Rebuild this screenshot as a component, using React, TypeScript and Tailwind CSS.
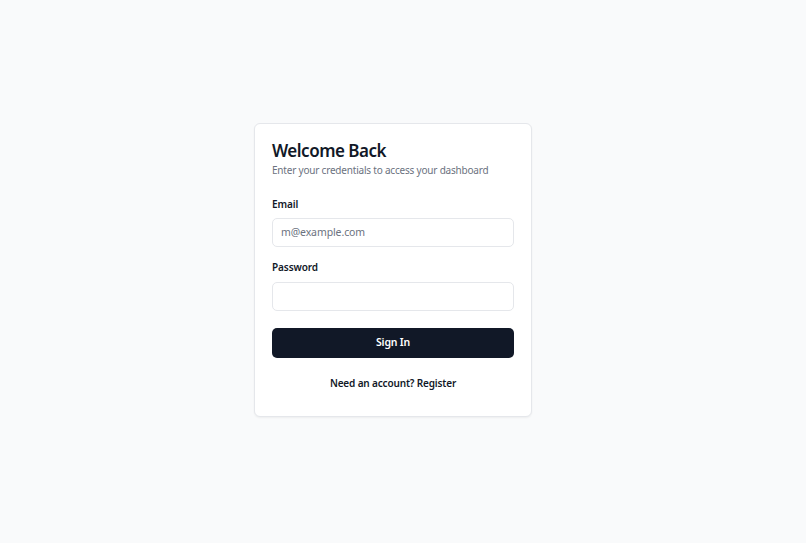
export default function App() {
  return (
    <div
      className="flex min-h-screen items-center justify-center bg-[#f9fafb] pr-[20px] pb-[4px] text-[#111827]"
      style={{ fontFamily: '"Noto Sans", "Open Sans", sans-serif' }}
    >
      <div className="w-[278px] rounded-[6px] border border-[#e5e7eb] bg-white px-[17px] pt-[15px] pb-[26px] shadow-[0_1px_2px_rgba(0,0,0,0.05)]">
        <h1 className="text-[17px] leading-[24px] font-semibold tracking-[-0.5px]">Welcome Back</h1>
        <p className="text-[10px] leading-[14px] tracking-[-0.2px] text-[#6b7280]">
          Enter your credentials to access your dashboard
        </p>

        <form className="mt-[20px] flex flex-col" onSubmit={(e) => e.preventDefault()}>
          <label className="text-[10px] leading-[14px] font-semibold tracking-[-0.1px]">Email</label>
          <input
            type="email"
            placeholder="m@example.com"
            className="mt-[7px] h-[29px] w-full rounded-[5px] border border-[#e5e7eb] px-[8px] text-[10.5px] tracking-[-0.1px] outline-none placeholder:text-[#6b7280]"
          />

          <label className="mt-[13px] text-[10px] leading-[14px] font-semibold tracking-[-0.1px]">Password</label>
          <input
            type="password"
            className="mt-[8px] h-[29px] w-full rounded-[5px] border border-[#e5e7eb] px-[8px] text-[10.5px] outline-none"
          />

          <button
            type="submit"
            className="mt-[17px] h-[30px] w-full rounded-[5px] bg-[#111827] text-[10.5px] font-semibold tracking-[-0.2px] text-white"
          >
            Sign In
          </button>
        </form>

        <p className="mt-[18px] text-center text-[10px] leading-[14px] font-semibold tracking-[-0.15px]">
          Need an account? Register
        </p>
      </div>
    </div>
  );
}
